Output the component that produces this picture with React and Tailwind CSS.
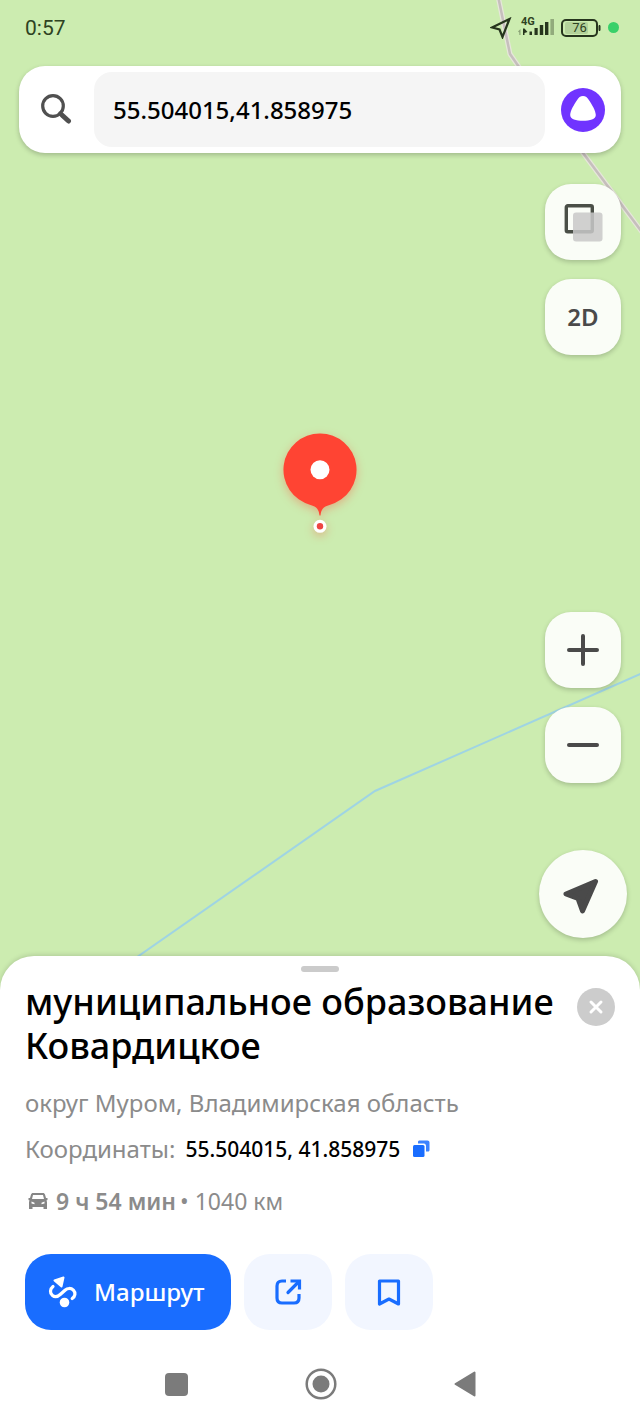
import { useState } from "react";

const MapLines = () => (
  <svg
    className="absolute inset-0 w-full h-full"
    viewBox="0 0 640 956"
    preserveAspectRatio="xMidYMin slice"
    fill="none"
    aria-hidden="true"
  >
    <path d="M498 -4 510 54 519 67 583 153 645 236" stroke="#e6e6da" strokeWidth="5" />
    <path d="M498 -4 510 54 519 67 583 153 645 236" stroke="#c6bfbd" strokeWidth="2.500" />
    <path d="M130 962 375 791 645 672" stroke="#9fd4e3" strokeWidth="2" />
  </svg>
);

const StatusBar = () => (
  <div className="relative flex items-center justify-between h-[66px] pl-[25px] pr-[21px] pb-[11px] text-[#2e4222]">
    <span className="font-[Roboto] text-[21px] leading-6">0:57</span>
    <div className="flex items-center">
      <svg className="w-[22px] h-[22px]" viewBox="0 0 22 22" fill="none" stroke="#26351d" strokeWidth="2.200">
        <path d="M19.500 2 2 10.500 9.500 12.500 12.500 20Z" strokeLinejoin="miter" />
      </svg>
      <div className="relative ml-[6px] w-9 h-[22px]">
        <span className="absolute left-[3px] top-[-1px] font-[Roboto] font-bold text-[11px] leading-3">4G</span>
        <svg className="w-full h-full" viewBox="0 0 36 22" fill="#26351d">
          <path d="M0 14.500 2.500 12v6h-1.200v-2.500Z" opacity=".4" />
          <path d="M5 11.500h1.500l3 3.500-3 1v2H5Z" />
          <path d="M11.500 14.500H14V18h-2.500zM16.500 11h3.200v7h-3.200zM21.800 8h3.400v10h-3.400zM27 5h3.400v13H27z" />
          <path d="M32.400 2H36v16h-3.600z" opacity=".35" />
        </svg>
      </div>
      <div className="relative ml-[7px] w-10 h-[18px]">
        <svg className="w-full h-full" viewBox="0 0 40 18" fill="none">
          <rect x="4" y="3" width="23" height="12" rx="2" fill="#b3d29a" />
          <rect x="1" y="1" width="35" height="16" rx="4" stroke="#26351d" strokeWidth="2" />
          <path d="M38 6.500h1v5h-1z" fill="#26351d" stroke="#26351d" />
        </svg>
        <span className="absolute left-0 top-px w-[37px] text-center font-[Roboto] text-[13px] leading-4">76</span>
      </div>
      <span className="ml-[7px] w-[11px] h-[11px] rounded-full bg-[#39d069]" />
    </div>
  </div>
);

const SearchBar = () => {
  const [query, setQuery] = useState("55.504015,41.858975");

  return (
    <div className="relative mx-[19px] h-[87px] flex items-center bg-white rounded-[26px] shadow-[0_2px_5px_rgba(0,0,0,0.22)]">
      <label htmlFor="search" className="w-[75px] pl-[21px]">
        <svg className="w-8 h-8" viewBox="0 0 32 32" fill="none" stroke="#505050" strokeLinecap="round">
          <circle cx="13" cy="12" r="10.300" strokeWidth="3.200" />
          <path d="M22.500 21.500 28.500 27" strokeWidth="5" />
          <path d="M20 19 22 21" strokeWidth="3.400" />
        </svg>
      </label>
      <input
        id="search"
        type="text"
        aria-label="Поиск"
        value={query}
        onChange={(e) => setQuery(e.target.value)}
        className="flex-1 min-w-0 h-[75px] px-[19px] rounded-[18px] bg-[#f5f5f5] text-2xl font-medium text-black outline-none"
      />
      <button aria-label="Алиса" className="w-[76px] flex justify-center">
        <svg className="w-11 h-11" viewBox="0 0 44 44">
          <circle cx="22" cy="22" r="22" fill="#7034ff" />
          <path
            d="M22 8c2.600 0 4.300 1.500 6.200 4.400 2.500 3.700 6.600 10.400 6.600 14.600C34.800 31.300 29 32.700 22 32.700S9.200 31.300 9.200 27c0-4.200 4.100-10.900 6.600-14.600C17.700 9.500 19.400 8 22 8Z"
            fill="#fff"
          />
        </svg>
      </button>
    </div>
  );
};

const MapButton = ({ label, children }) => (
  <button
    aria-label={label}
    className="w-[76px] h-[76px] flex items-center justify-center rounded-[26px] bg-[#fafdf7] text-2xl font-semibold text-[#4a4a4a] shadow-[0_2px_5px_rgba(0,0,0,0.2)]"
  >
    {children}
  </button>
);

const Pin = () => (
  <svg
    className="absolute left-1/2 top-[422px] -translate-x-1/2 w-[100px] h-[120px] drop-shadow-[0_3px_5px_rgba(255,70,50,0.35)]"
    viewBox="0 0 100 120"
    aria-hidden="true"
  >
    <path
      d="M50 11.500a36.300 36.300 0 0 1 9.500 71.400C53 84.500 51 88 50.500 93.500h-1C49 88 47 84.500 40.500 82.900A36.300 36.300 0 0 1 50 11.500Z"
      fill="#ff4433"
    />
    <circle cx="50" cy="47.700" r="9.500" fill="#fff" />
    <circle cx="50" cy="104.300" r="6.500" fill="#fff" />
    <circle cx="50" cy="104.300" r="3.200" fill="#ed4543" />
  </svg>
);

const MapControls = () => (
  <div className="relative flex-1 flex flex-col items-end pt-[31px] pb-[18px]">
    <div className="flex flex-col gap-[19px] pr-[19px]">
      <MapButton label="Слои">
        <svg className="w-10 h-10" viewBox="0 0 40 40" fill="none">
          <rect x="3.300" y="3.700" width="26" height="26" rx="1.500" stroke="#4a4f47" strokeWidth="3.400" />
          <rect x="10" y="10.500" width="29.500" height="29" rx="3" fill="#c8c8c8" fillOpacity=".86" />
        </svg>
      </MapButton>
      <MapButton label="2D">2D</MapButton>
    </div>
    <div className="mt-auto flex flex-col gap-[19px] pr-[19px]">
      <MapButton label="Приблизить">
        <svg className="w-8 h-8" viewBox="0 0 32 32" stroke="#4a4a4a" strokeWidth="4" strokeLinecap="round">
          <path d="M2 16h28M16 2v28" />
        </svg>
      </MapButton>
      <MapButton label="Отдалить">
        <svg className="w-8 h-8" viewBox="0 0 32 32" stroke="#4a4a4a" strokeWidth="4" strokeLinecap="round">
          <path d="M2 16h28" />
        </svg>
      </MapButton>
    </div>
    <button
      aria-label="Моё местоположение"
      className="mt-[67px] mr-[13px] w-[88px] h-[88px] flex items-center justify-center rounded-full bg-[#fafdf7] shadow-[0_2px_5px_rgba(0,0,0,0.2)]"
    >
      <svg className="w-10 h-10" viewBox="0 0 40 40" fill="#4a4a4a" stroke="#4a4a4a" strokeWidth="5" strokeLinejoin="round">
        <path d="M32.500 7.500 3 20 15 24.500 19.500 37Z" />
      </svg>
    </button>
  </div>
);

const PlaceCard = () => (
  <section className="relative pt-[10px] px-[25px] bg-white rounded-t-[34px] shadow-[0_-1px_5px_rgba(0,0,0,0.15)]">
    <div className="mx-auto w-[38px] h-[6px] rounded-full bg-[#cbcbcb]" />

    <div className="mt-2 flex items-start justify-between">
      <h1 className="text-4xl leading-[44px] font-medium text-black">
        муниципальное образование Ковардицкое
      </h1>
      <button aria-label="Закрыть" className="mt-2 shrink-0 w-[38px] h-[38px] flex items-center justify-center rounded-full bg-[#cccccc]">
        <svg className="w-4 h-4" viewBox="0 0 16 16" stroke="#fff" strokeWidth="3" strokeLinecap="round">
          <path d="M3 3 13 13M13 3 3 13" />
        </svg>
      </button>
    </div>

    <p className="mt-[19px] text-2xl leading-8 text-[#8b8b8b]">округ Муром, Владимирская область</p>

    <div className="mt-[14px] flex items-center h-8 text-2xl text-[#8b8b8b]">
      <span>Координаты:</span>
      <span className="ml-[10px] text-[21px] font-medium text-black">55.504015, 41.858975</span>
      <button aria-label="Скопировать" className="ml-3">
        <svg className="w-[18px] h-[18px]" viewBox="0 0 18 18">
          <path d="M6 3.500V2C6 1 6.700.5 7.500.5H15.500c1 0 2 .8 2 2V10c0 1-.7 1.500-1.500 1.500H14V6C14 4.500 13 3.500 12 3.500Z" fill="#3d83ff" />
          <rect x="1" y="5" width="11.500" height="12" rx="1.500" fill="#196dff" />
        </svg>
      </button>
    </div>

    <div className="mt-5 flex items-center h-8 text-[#8b8b8b]">
      <svg className="ml-[3px] w-5 h-5" viewBox="0 0 20 20" fill="#858585">
        <path
          fillRule="evenodd"
          d="M5 2h10c1 0 1.700.6 2 1.500L18 7h1.500v2l-1 .5.500 1.500v7h-3.500v-2h-11v2H1v-7l.5-1.500-1-.5V7H2l1-3.500C3.300 2.600 4 2 5 2Zm0 2L4 8h12l-1-4ZM3.500 10.500v2l3 .8v-1.500Zm13 0-3 1.300v1.500l3-.8Z"
        />
      </svg>
      <span className="ml-2 text-[23px] font-semibold">9 ч 54 мин</span>
      <span className="ml-1 text-[23px]">• 1040 км</span>
    </div>

    <div className="mt-[37px] flex gap-[13px]">
      <button className="w-[206px] h-[76px] flex items-center pl-[23px] rounded-[26px] bg-[#196dff] text-2xl font-medium text-white">
        <svg className="w-[30px] h-8" viewBox="0 0 30 32" fill="none">
          <path d="M6.500 4.500 15.500 1.500 13.500 10.500Z" fill="#fff" stroke="#fff" strokeWidth="2" strokeLinejoin="round" />
          <path
            d="M5 10.500C2 13 1.500 17 4.500 19.500c2.500 2 5.500 1 8-1.300l4.500-4c2.500-2.200 6-2.400 8.400 0 2.400 2.600 2 6-1.200 8.300"
            stroke="#fff"
            strokeWidth="3.200"
            strokeLinecap="round"
          />
          <circle cx="16.500" cy="26.500" r="4.800" fill="#fff" />
        </svg>
        <span className="ml-4">Маршрут</span>
      </button>
      <button aria-label="Поделиться" className="w-[88px] h-[76px] flex items-center justify-center rounded-[26px] bg-[#f2f6ff]">
        <svg className="w-7 h-7" viewBox="0 0 28 28" fill="none" stroke="#196dff" strokeWidth="3.200">
          <path d="M12 3H8C4.500 3 3 4.500 3 8v12c0 3.500 1.500 5 5 5h12c3.500 0 5-1.500 5-5v-4" />
          <path d="M14 14.500 24 4.500" strokeLinecap="round" />
          <path d="M16.500 3H25.500V11.500" />
        </svg>
      </button>
      <button aria-label="Сохранить" className="w-[88px] h-[76px] flex items-center justify-center rounded-[26px] bg-[#f2f6ff]">
        <svg className="w-7 h-7" viewBox="0 0 28 28" fill="none" stroke="#196dff" strokeWidth="3.200" strokeLinejoin="round">
          <path d="M4.500 3h19v23L14 21 4.500 26Z" />
        </svg>
      </button>
    </div>

    <nav className="pt-[15px] h-[93px] flex items-center justify-center gap-[117px]">
      <button aria-label="Недавние" className="w-[23px] h-[23px] rounded-[4px] bg-[#7b7b7b]" />
      <button aria-label="Домой">
        <svg className="w-8 h-8" viewBox="0 0 32 32" fill="none">
          <circle cx="16" cy="16" r="14.300" stroke="#7b7b7b" strokeWidth="2.500" />
          <circle cx="16" cy="16" r="8.500" fill="#7b7b7b" />
        </svg>
      </button>
      <button aria-label="Назад">
        <svg className="w-[22px] h-[26px]" viewBox="0 0 22 26" fill="#7b7b7b" stroke="#7b7b7b" strokeWidth="2" strokeLinejoin="round">
          <path d="M20.500 1.500v23L1.500 13Z" />
        </svg>
      </button>
    </nav>
  </section>
);

const App = () => {
  return (
    <main className="min-h-screen flex flex-col bg-[#ccecb0] font-['Noto_Sans',sans-serif]">
      <div className="relative flex-1 flex flex-col">
        <MapLines />
        <StatusBar />
        <SearchBar />
        <Pin />
        <MapControls />
      </div>
      <PlaceCard />
    </main>
  );
};

export default App;
